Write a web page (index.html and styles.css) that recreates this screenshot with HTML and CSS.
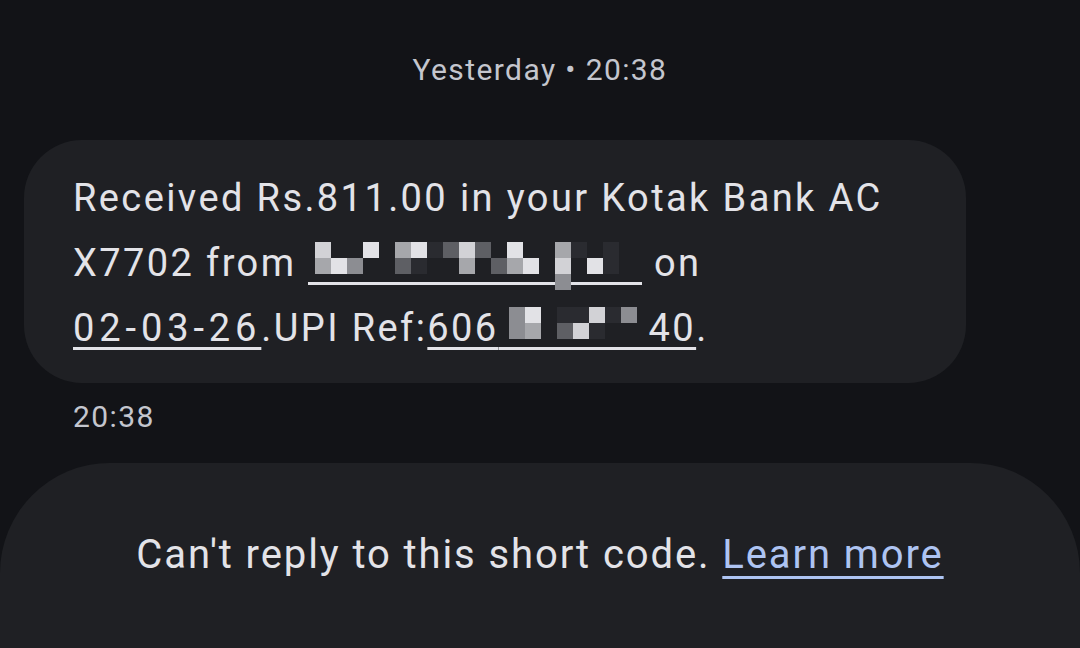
FILE: index.html
```html
<!DOCTYPE html>
<html lang="en">
<head>
<meta charset="utf-8">
<title>Messages</title>
<link rel="stylesheet" href="styles.css">
</head>
<body>
<main class="thread">
  <div class="date-sep">Yesterday • 20:38</div>
  <div class="bubble">
    <p class="msg">Received Rs.811.00 in your Kotak Bank AC X7702 from <span class="redact r1"><span class="g5"></span><span></span><span></span><span class="g6"></span><span></span><span class="g4"></span><span class="g6"></span><span class="g1"></span><span class="g2"></span><span class="g5"></span><span class="g2"></span><span></span><span class="g6"></span><span></span><span></span><span class="g4"></span><span class="g1"></span><span></span><span class="g1"></span><span></span><span class="g4"></span><span class="g6"></span><span class="g3"></span><span></span><span></span><span class="g2"></span><span class="g1"></span><span></span><span></span><span class="g4"></span><span></span><span class="g2"></span><span class="g4"></span><span class="g6"></span><span></span><span class="g5"></span><span></span><span class="g6"></span><span class="g1"></span><span></span><span></span><span></span><span></span><span></span><span></span><span></span><span></span><span></span><span></span><span></span><span></span><span></span><span></span><span></span><span></span><span class="g3"></span></span> on <span class="nw"><span class="u date">02-03-26</span>.UPI</span> Ref:<span class="u nw">606<span class="redact r2"><span class="g3"></span><span class="g6"></span><span></span><span class="g1"></span><span class="g1"></span><span class="g5"></span><span class="g1"></span><span class="g3"></span><span class="g3"></span><span class="g4"></span><span></span><span class="g2"></span><span class="g5"></span><span class="g1"></span><span></span><span></span></span>40</span>.</p>
  </div>
  <div class="time">20:38</div>
</main>
<footer class="notice">
  <p>Can't reply to this short code. <a class="learn" href="#">Learn more</a></p>
</footer>
</body>
</html>
```
FILE: styles.css
```css
html, body {
  margin: 0;
  padding: 0;
}
body {
  width: 1080px;
  height: 648px;
  overflow: hidden;
  background: #121317;
  color: #e3e3e8;
  font-family: Roboto, "Noto Sans", sans-serif;
  display: flex;
  flex-direction: column;
}
.thread {
  display: flex;
  flex-direction: column;
  padding: 0 24px;
}
.date-sep {
  margin-top: 50px;
  height: 40px;
  line-height: 40px;
  font-size: 30px;
  letter-spacing: 1.4px;
  text-align: center;
  color: #c4c6ce;
}
.bubble {
  margin-top: 50px;
  width: 942px;
  height: 243px;
  box-sizing: border-box;
  padding: 26px 30px 0 49px;
  background: #1f2024;
  border-radius: 58px;
}
.msg {
  margin: 0;
  font-size: 38px;
  line-height: 65px;
  letter-spacing: 2.4px;
}
.nw {
  white-space: nowrap;
}
.u {
  text-decoration: underline;
  text-decoration-thickness: 3px;
  text-underline-offset: 6px;
}
.date {
  letter-spacing: 4.9px;
}
.redact {
  display: inline-grid;
  grid-auto-rows: 16px;
  vertical-align: text-top;
  margin-top: 1px;
  background: linear-gradient(#e3e3e8, #e3e3e8) no-repeat 0 40px / 100% 3px;
}
.r1 {
  grid-template-columns: repeat(20, 16px);
  padding: 0 7px;
  height: 48px;
}
.r2 {
  grid-template-columns: repeat(8, 16px);
  padding: 0 12px 0 10px;
  height: 48px;
}
.g1 { background: #2a2b30; }
.g2 { background: #5e5f64; }
.g3 { background: #8c8d92; }
.g4 { background: #a6a7ab; }
.g5 { background: #d2d2d6; }
.g6 { background: #e2e2e6; }
.time {
  margin-top: 14px;
  padding-left: 49px;
  font-size: 30px;
  line-height: 40px;
  letter-spacing: 1.4px;
  color: #c4c6ce;
}
.notice {
  margin-top: 26px;
  flex: 1;
  background: #1f2024;
  border-radius: 110px 110px 0 0;
  display: flex;
  justify-content: center;
}
.notice p {
  margin: 64px 0 0;
  font-size: 40px;
  line-height: 56px;
  letter-spacing: 1.9px;
  color: #e3e3e8;
}
.learn {
  color: #aec4f2;
  text-decoration: underline;
  text-decoration-thickness: 3px;
  text-underline-offset: 8px;
}
```
